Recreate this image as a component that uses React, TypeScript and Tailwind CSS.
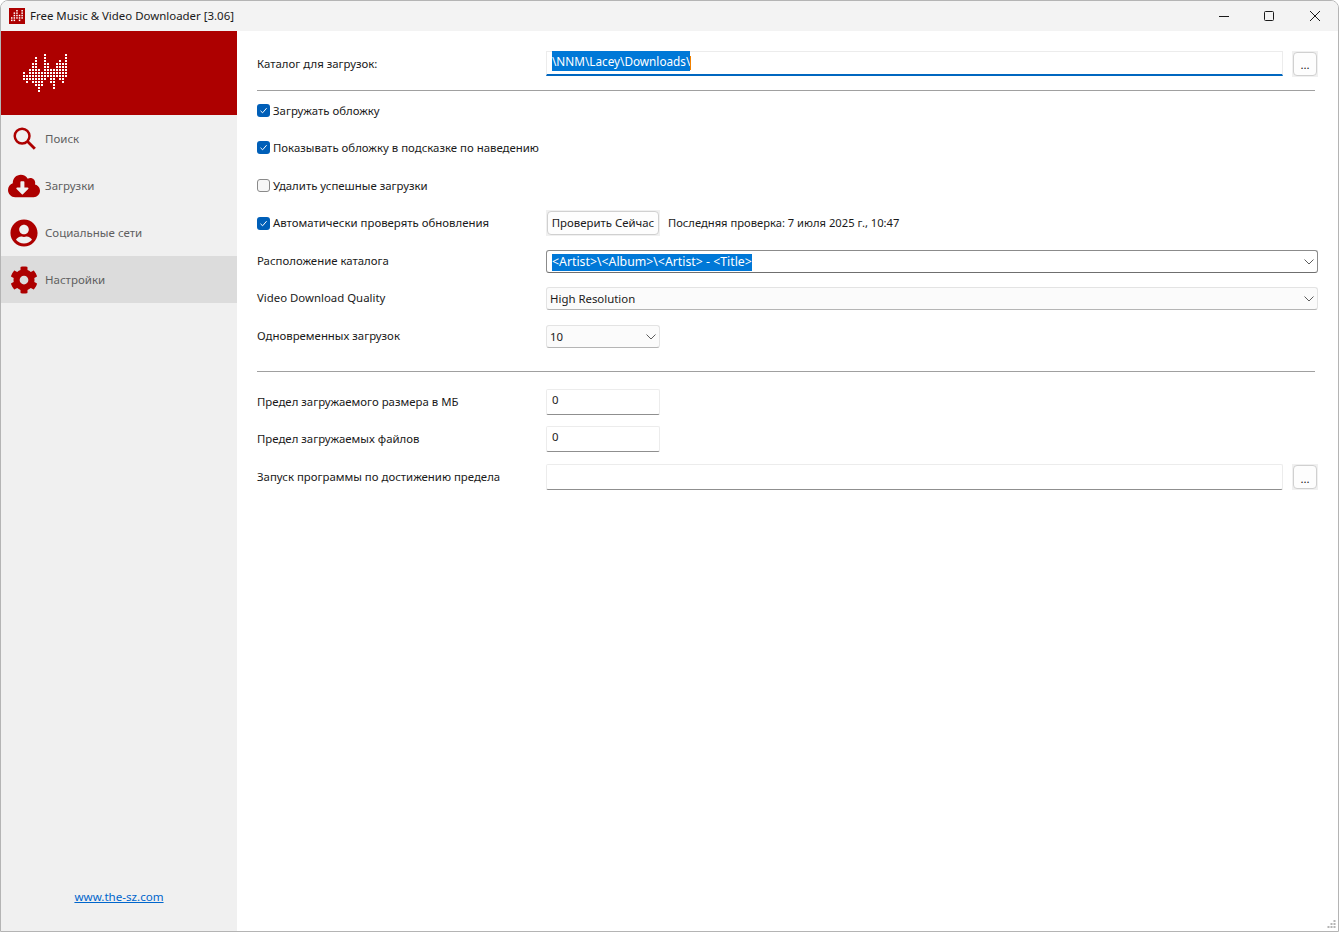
import type { ReactNode } from "react";
import { FaCloudDownloadAlt, FaCog, FaUserCircle } from "react-icons/fa";

// first and last lit row per column of the equalizer logo
const logoColumns = [
  [6, 8], [7, 9], [5, 8], [3, 9], [1, 10], [5, 12], [6, 10], [0, 8],
  [3, 7], [5, 9], [5, 11], [3, 7], [2, 8], [3, 9], [0, 7],
];

function Logo() {
  return (
    <svg width="48" height="40" viewBox="0 0 48 40" className="block">
      {logoColumns.map(([from, to], col) =>
        Array.from({ length: to - from + 1 }, (_, i) => (
          <rect key={`${col}-${i}`} x={col * 3} y={(from + i) * 3} width="2" height="2" fill="#fff" />
        )),
      )}
    </svg>
  );
}

function AppIcon() {
  const cols = [[3, 4], [1, 4], [0, 3], [2, 4], [0, 3]];
  return (
    <svg width="16" height="16" viewBox="0 0 16 16" className="block">
      <rect width="16" height="16" fill="#ad0000" />
      {cols.map(([from, to], c) =>
        Array.from({ length: to - from + 1 }, (_, i) => (
          <rect key={`${c}-${i}`} x={2 + c * 2.6} y={2 + (from + i) * 2.4} width="1.5" height="1.5" fill="#fff" />
        )),
      )}
    </svg>
  );
}

function SearchIcon() {
  return (
    <svg width="23" height="23" viewBox="0 0 24 24" fill="none" stroke="#ad0000" className="block">
      <circle cx="9.5" cy="9.5" r="7.7" strokeWidth="2.6" />
      <path d="M15.2 15.2 L22.8 22.6" strokeWidth="3" />
    </svg>
  );
}

const navItems = [
  { label: "Поиск", icon: <SearchIcon />, active: false },
  { label: "Загрузки", icon: <FaCloudDownloadAlt className="size-8 text-[#ad0000]" />, active: false },
  { label: "Социальные сети", icon: <FaUserCircle className="size-7 text-[#ad0000]" />, active: false },
  { label: "Настройки", icon: <FaCog className="size-7 text-[#ad0000]" />, active: true },
];

function Sidebar() {
  return (
    <aside className="flex w-[236px] shrink-0 flex-col bg-[#f0f0f0]">
      <div className="flex h-[84px] items-start bg-[#ad0000] pl-[22px] pt-[23px]">
        <Logo />
      </div>
      <nav>
        {navItems.map((item) => (
          <div key={item.label} className={`flex h-[47px] items-center ${item.active ? "bg-[#dcdcdc]" : ""}`}>
            <div className="flex w-[44px] shrink-0 justify-center pl-[2px]">{item.icon}</div>
            <span className="text-[11.5px] text-[#5f5f5f]">{item.label}</span>
          </div>
        ))}
      </nav>
      <a className="mt-auto mb-[28px] text-center text-[11.6px] text-[#0066cc] underline" href="#">
        www.the-sz.com
      </a>
    </aside>
  );
}

function Check({ checked, label, textClass = "" }: { checked?: boolean; label: string; textClass?: string }) {
  return (
    <div className="flex items-center gap-[3px]">
      {checked ? (
        <span className="flex size-[13px] items-center justify-center rounded-[3px] bg-[#005fb8]">
          <svg width="9" height="9" viewBox="0 0 9 9" fill="none" stroke="#fff" strokeWidth="1" className="block">
            <path d="M1.5 4.8 L3.6 6.8 L7.6 2.2" />
          </svg>
        </span>
      ) : (
        <span className="size-[13px] rounded-[3px] border border-[#8a8a8a] bg-[#f6f6f6]" />
      )}
      <span className={textClass}>{label}</span>
    </div>
  );
}

function Label({ children, className = "" }: { children: ReactNode; className?: string }) {
  return <div className={`w-[289px] shrink-0 ${className}`}>{children}</div>;
}

function Chevron() {
  return (
    <svg width="10" height="6" viewBox="0 0 10 6" fill="none" stroke="#5c5c5c" className="block shrink-0">
      <path d="M0.5 0.5 L5 5 L9.5 0.5" />
    </svg>
  );
}

function Select({ children, focused, className = "" }: { children: ReactNode; focused?: boolean; className?: string }) {
  return (
    <div
      className={`flex h-[23px] items-center justify-between rounded-[3px] border pl-[3px] pr-[3px] ${
        focused ? "border-[#8b8b8b] border-b-[#6f6f6f] bg-white" : "border-[#e3e3e3] border-b-[#b5b5b5] bg-[#fbfbfb]"
      } ${className}`}
    >
      {children}
      <Chevron />
    </div>
  );
}

function TextBox({ children, className = "" }: { children?: ReactNode; className?: string }) {
  return (
    <div className={`h-[26px] rounded-[2px] border border-[#ececec] border-b-[#8f8f8f] bg-white pl-[5px] pt-[4px] ${className}`}>
      {children}
    </div>
  );
}

function BrowseButton() {
  return (
    <div className="ml-[9px] flex h-[26px] w-[26px] shrink-0 bg-[#f0f0f0] p-px">
      <div className="flex flex-1 items-center justify-center rounded-[4px] border border-[#d0d0d0] bg-[#fdfdfd] pt-[3px] leading-none">
        ...
      </div>
    </div>
  );
}

function Divider({ className }: { className: string }) {
  return <div className={`mr-[3px] h-px bg-[#a0a0a0] ${className}`} />;
}

export default function App() {
  return (
    <div className="h-[932px] w-[1339px] bg-white font-['Noto_Sans','Open_Sans',sans-serif] text-[11.4px] leading-none text-[#1a1a1a]">
      <div className="flex h-full flex-col overflow-hidden rounded-t-[8px] border border-[#b4b4b4]">
        <header className="flex h-[30px] shrink-0 items-center bg-[#f3f3f3] pl-[8px]">
          <AppIcon />
          <span className="ml-[5px] text-[11.45px]">Free Music &amp; Video Downloader [3.06]</span>
          <div className="ml-auto flex items-center">
            <svg width="10" height="10" viewBox="0 0 10 10" stroke="#1a1a1a" className="mr-[35px] block">
              <path d="M0 5.5 H10" />
            </svg>
            <svg width="10" height="10" viewBox="0 0 10 10" fill="none" stroke="#1a1a1a" className="mr-[36px] block">
              <rect x="0.5" y="0.5" width="9" height="9" rx="1" />
            </svg>
            <svg width="10" height="10" viewBox="0 0 10 10" stroke="#1a1a1a" className="mr-[18px] block">
              <path d="M0 0 L10 10 M10 0 L0 10" />
            </svg>
          </div>
        </header>

        <div className="flex min-h-0 flex-1">
          <Sidebar />
          <main className="relative flex-1 bg-white pl-[20px] pr-[20px] pt-[20px]">
            <div className="flex h-[25px] items-center">
              <Label>Каталог для загрузок:</Label>
              <div className="flex flex-1 items-center">
                <div className="h-[25px] flex-1 border border-[#ececec] border-b-2 border-b-[#0067c0] pl-[5px] pt-[4px]">
                  <span className="bg-[#0078d7] py-[2px] text-[11.75px] text-white">\NNM\Lacey\Downloads\</span>
                  <span className="inline-block h-[14px] w-px bg-[#f08000] align-middle" />
                </div>
                <BrowseButton />
              </div>
            </div>
            <Divider className="mt-[14px]" />
            <div className="mt-[9px] flex h-[20px] items-center">
              <Check checked label="Загружать обложку" textClass="pt-[2px]" />
            </div>
            <div className="mt-[17px] flex h-[20px] items-center">
              <Check checked label="Показывать обложку в подсказке по наведению" textClass="pt-[2px]" />
            </div>
            <div className="mt-[18px] flex h-[20px] items-center">
              <Check label="Удалить успешные загрузки" textClass="pt-[2px]" />
            </div>
            <div className="mt-[16px] flex h-[24px] items-center">
              <div className="w-[289px] shrink-0">
                <Check checked label="Автоматически проверять обновления" />
              </div>
              <div className="flex h-[26px] w-[114px] bg-[#f0f0f0] p-px">
                <div className="flex flex-1 items-center justify-center rounded-[4px] border border-[#d0d0d0] bg-[#fdfdfd]">
                  Проверить Сейчас
                </div>
              </div>
              <span className="ml-[8px] text-[11.2px]">Последняя проверка: 7 июля 2025 г., 10:47</span>
            </div>
            <div className="mt-[15px] flex items-center">
              <Label className="pb-[2px]">Расположение каталога</Label>
              <Select focused className="flex-1">
                <span className="ml-[2px] mt-[2px] bg-[#0078d7] py-[2px] text-[12.3px] text-white">&lt;Artist&gt;\&lt;Album&gt;\&lt;Artist&gt; - &lt;Title&gt;</span>
              </Select>
            </div>
            <div className="mt-[14px] flex items-center">
              <Label className="pb-[2px]">Video Download Quality</Label>
              <Select className="flex-1">
                <span>High Resolution</span>
              </Select>
            </div>
            <div className="mt-[15px] flex items-center">
              <Label className="pb-[2px]">Одновременных загрузок</Label>
              <Select className="w-[114px]">
                <span>10</span>
              </Select>
            </div>
            <Divider className="mt-[23px]" />
            <div className="mt-[17px] flex items-center">
              <Label>Предел загружаемого размера в МБ</Label>
              <TextBox className="w-[114px]">0</TextBox>
            </div>
            <div className="mt-[11px] flex items-center">
              <Label>Предел загружаемых файлов</Label>
              <TextBox className="w-[114px]">0</TextBox>
            </div>
            <div className="mt-[12px] flex items-center">
              <Label>Запуск программы по достижению предела</Label>
              <div className="flex flex-1 items-center">
                <TextBox className="flex-1" />
                <BrowseButton />
              </div>
            </div>
            <svg width="10" height="10" viewBox="0 0 10 10" fill="#b4b4b4" className="absolute bottom-[1px] right-[1px] block">
              <rect x="6.5" y="0" width="2" height="2" />
              <rect x="3.5" y="3" width="2" height="2" />
              <rect x="6.5" y="3" width="2" height="2" />
              <rect x="0.5" y="6" width="2" height="2" />
              <rect x="3.5" y="6" width="2" height="2" />
              <rect x="6.5" y="6" width="2" height="2" />
            </svg>
          </main>
        </div>
      </div>
    </div>
  );
}
